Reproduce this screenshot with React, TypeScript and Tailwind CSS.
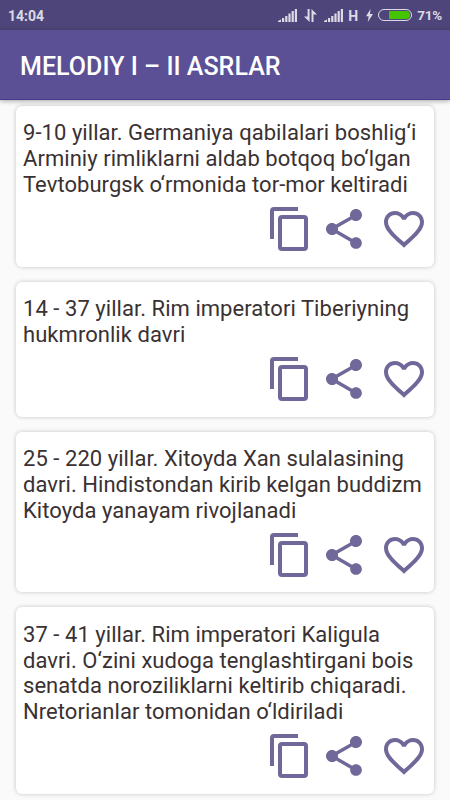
import { MdFavoriteBorder, MdShare } from "react-icons/md";

type Entry = {
    id: number;
    lines: string[];
};

const entries: Entry[] = [
    {
        id: 1,
        lines: [
            "9-10 yillar. Germaniya qabilalari boshlig‘i",
            "Arminiy rimliklarni aldab botqoq bo‘lgan",
            "Tevtoburgsk o‘rmonida tor-mor keltiradi",
        ],
    },
    {
        id: 2,
        lines: ["14 - 37 yillar. Rim imperatori Tiberiyning", "hukmronlik davri"],
    },
    {
        id: 3,
        lines: [
            "25 - 220 yillar. Xitoyda Xan sulalasining",
            "davri. Hindistondan kirib kelgan buddizm",
            "Kitoyda yanayam rivojlanadi",
        ],
    },
    {
        id: 4,
        lines: [
            "37 - 41 yillar. Rim imperatori Kaligula",
            "davri. O‘zini xudoga tenglashtirgani bois",
            "senatda noroziliklarni keltirib chiqaradi.",
            "Nretorianlar tomonidan o‘ldiriladi",
        ],
    },
];

function SignalIcon() {
    return (
        <svg width="19" height="13" viewBox="0 0 19 13" fill="currentColor">
            <path d="M0 13v-1l3-1.5V13z" />
            <rect x="4" y="9" width="2.2" height="4" />
            <rect x="7.2" y="7" width="2.2" height="6" />
            <rect x="10.4" y="4.5" width="2.2" height="8.5" />
            <rect x="13.6" y="2" width="2.2" height="11" />
            <rect x="16.8" y="0" width="2.2" height="13" />
        </svg>
    );
}

function DataArrowsIcon() {
    return (
        <svg width="13" height="13" viewBox="0 0 13 13" fill="currentColor">
            <path d="M3.6 0h2v13L0 7.6h3.6z" />
            <path d="M7.5 0L13 5.4H9.5V13h-2z" />
        </svg>
    );
}

function CopyIcon() {
    return (
        <svg className="size-12" viewBox="0 0 24 24" fill="none" stroke="currentColor" strokeWidth="2">
            <path d="M3 17V3q0-1 1-1h12" />
            <rect x="7" y="6" width="13" height="16" rx="1" />
        </svg>
    );
}

function StatusBar() {
    return (
        <div className="flex h-[30px] items-center bg-[#4e467b] pr-[8px] pl-[8px] text-[13.5px] leading-none font-bold text-[#dcdae5]">
            <span className="pt-[2px] text-[14px]">14:04</span>
            <div className="ml-auto flex items-center">
                <SignalIcon />
                <div className="ml-[7px]">
                    <DataArrowsIcon />
                </div>
                <div className="ml-[7px]">
                    <SignalIcon />
                </div>
                <span className="ml-[5px] pt-[2px] text-[14px]">H</span>
                <svg className="ml-[8px]" width="7" height="13" viewBox="0 0 7 13" fill="currentColor">
                    <path d="M4.6 0L0 7.2h2.7L1.8 13 7 5H4z" />
                </svg>
                <div className="ml-[5px] flex h-[12px] w-[34px] justify-end rounded-full border border-[#dcdae5] p-[1px]">
                    <div className="h-full w-[21px] rounded-r-full bg-[#45c400]" />
                </div>
                <span className="ml-[5px] pt-[2px] tracking-[-0.2px]">71%</span>
            </div>
        </div>
    );
}

function EntryCard({ lines }: { lines: string[] }) {
    return (
        <article className="rounded-[6px] bg-white pt-[14.4px] pr-[6px] pb-[13.6px] pl-[7px] shadow-[0_0_4px_rgba(0,0,0,0.22)]">
            <p className="text-[22px] leading-[25.75px] tracking-[0.05px] text-[#3a3132]">
                {lines.map((line) => (
                    <span key={line} className="block whitespace-nowrap">
                        {line}
                    </span>
                ))}
            </p>
            <div className="mt-[7.5px] flex justify-end text-[#6f6899]">
                <button type="button" aria-label="Nusxalash">
                    <CopyIcon />
                </button>
                <button type="button" aria-label="Ulashish" className="ml-[6px]">
                    <MdShare className="size-12" />
                </button>
                <button type="button" aria-label="Saralangan" className="ml-3">
                    <MdFavoriteBorder className="size-12" />
                </button>
            </div>
        </article>
    );
}

export default function App() {
    return (
        <div className="flex h-[800px] w-[450px] flex-col overflow-hidden bg-[#fafafa] font-['Roboto',sans-serif]">
            <StatusBar />
            <header className="z-10 flex h-[70px] shrink-0 items-center border-b border-[#47398a] bg-[#5b5095] pl-[20px] shadow-[0_1px_5px_rgba(0,0,0,0.35)]">
                <h1 className="pt-[4px] text-[25px] leading-none font-medium tracking-[0.03px] text-white">MELODIY I – II ASRLAR</h1>
            </header>
            <main className="flex flex-col gap-[15px] px-4 pt-[6px]">
                {entries.map((entry) => (
                    <EntryCard key={entry.id} lines={entry.lines} />
                ))}
            </main>
        </div>
    );
}
